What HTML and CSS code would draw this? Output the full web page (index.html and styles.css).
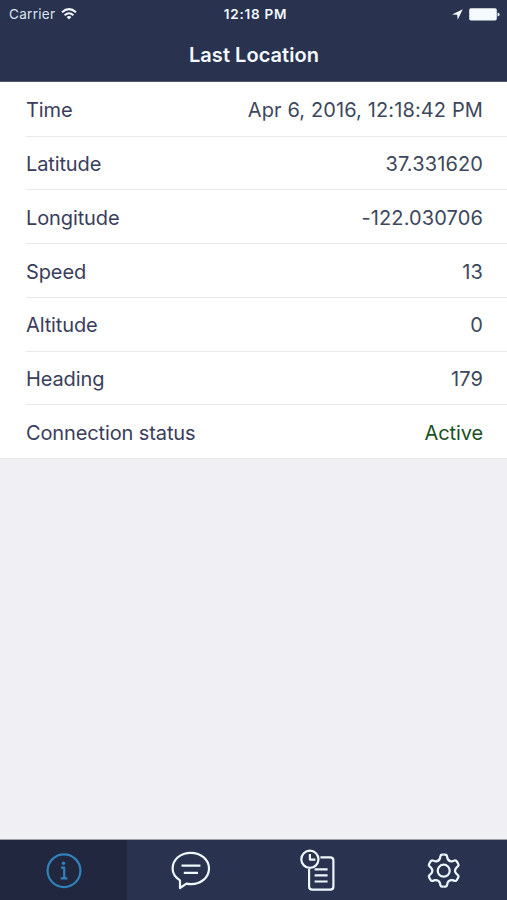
FILE: index.html
```html
<!DOCTYPE html>
<html lang="en">
<head>
<meta charset="utf-8">
<title>Last Location</title>
<link rel="stylesheet" href="styles.css">
</head>
<body>
<div class="app">
  <header class="header">
    <div class="status">
      <div class="carrier"><span>Carrier</span>
        <svg class="wifi" width="16" height="12" viewBox="0 0 16 12" fill="none" stroke="currentColor" stroke-width="2"><path d="M1 4.3Q8-2 15 4.3M3.6 7.2Q8 3.2 12.4 7.2"/><path d="M5.6 9Q8 7 10.4 9L8 11.5Z" fill="currentColor" stroke="none"/></svg>
      </div>
      <div class="clock">12:18 PM</div>
      <div class="indicators">
        <svg width="11" height="11" viewBox="0 0 11 11" fill="currentColor"><path d="M10.8.2 0 5.6 5.2 5.8 5.7 10.8Z"/></svg>
        <svg width="31" height="13" viewBox="0 0 31 13" fill="currentColor"><rect x=".2" y=".3" width="27.6" height="12.2" rx="1.8"/><path d="M28.6 4.4Q30.6 4.8 30.6 6.4T28.6 8.4Z"/></svg>
      </div>
    </div>
    <h1 class="title">Last Location</h1>
  </header>
  <main class="list">
    <div class="row"><span class="label">Time</span><span class="value">Apr 6, 2016, 12:18:42 PM</span></div>
    <div class="row"><span class="label">Latitude</span><span class="value">37.331620</span></div>
    <div class="row"><span class="label">Longitude</span><span class="value">-122.030706</span></div>
    <div class="row"><span class="label">Speed</span><span class="value">13</span></div>
    <div class="row"><span class="label">Altitude</span><span class="value">0</span></div>
    <div class="row"><span class="label">Heading</span><span class="value">179</span></div>
    <div class="row"><span class="label">Connection status</span><span class="value active">Active</span></div>
  </main>
  <nav class="tabs">
    <a class="tab selected" aria-label="Info">
      <svg class="icon" viewBox="-22 -22 44 44"><circle cx="1" cy=".7" r="16.4"/><path d="M-2-2.3H1.2V8.4M-2.3 8.4H4.4"/><circle cx=".5" cy="-6.8" r="1.7" class="solid"/></svg>
    </a>
    <a class="tab" aria-label="Messages">
      <svg class="icon" viewBox="-22 -22 44 44"><path d="M-10 10.4C-14.8 7.4-17.4 3.6-17.4-1.4C-17.4-10.6-9.5-17.2.8-17.2S19-10.4 19-1.5S11.2 14.2 1 14.2Q-1.2 14.2-3.6 13.7L-10 18Z"/><path d="M-8.5-4.3H10.4M-6.2 2.8H8" stroke-width="2.3"/></svg>
    </a>
    <a class="tab" aria-label="History">
      <svg class="icon" viewBox="-22 -22 44 44"><circle cx="-7.1" cy="-10.7" r="8.6"/><path d="M-7.1-16V-10.4H-1.6M3.4-12.7H13.2Q16.4-12.7 16.4-9.5V16.4Q16.4 19.6 13.2 19.6H-4.7Q-7.9 19.6-7.9 16.4V-1M-2.4-.6H10.6M-2.4 5.4H10.6M-2.4 11.5H10.6"/></svg>
    </a>
    <a class="tab" aria-label="Settings">
      <svg class="icon" viewBox="-22 -22 44 44"><g transform="translate(-.3 .7)"><path id="half" d="M0-16H1.5Q3-16 3.3-14.5L3.8-12.2Q5-9 8.67-9.39L11-10.2Q12.36-10.6 13.1-9.3L14.6-6.7Q15.36-5.4 14.2-4.4L12.47-2.81Q10.2 0 12.47 2.81L14.2 4.4Q15.36 5.4 14.6 6.7L13.1 9.3Q12.36 10.6 11 10.2L8.67 9.39Q5 9 3.8 12.2L3.3 14.5Q3 16 1.5 16H0"/><use href="#half" transform="scale(-1 1)"/><circle r="6"/></g></svg>
    </a>
  </nav>
</div>
</body>
</html>
```
FILE: styles.css
```css
* { box-sizing: border-box; }
body { margin: 0; font-family: Inter, "Liberation Sans", sans-serif; background: #efeff4; }
.app { height: 900px; display: flex; flex-direction: column; }
.header { height: 82px; background: #29324f; color: #f4faff; border-bottom: 1px solid #56586c; }
.status { height: 27px; display: grid; grid-template-columns: 1fr auto 1fr; align-items: center; padding: 1px 7px 0 9px; font-size: 13.5px; }
.carrier { display: flex; align-items: center; gap: 6px; color: #dbe5f0; letter-spacing: .3px; }
.wifi { color: #f4faff; }
.clock { font-weight: 600; font-size: 13.5px; letter-spacing: .75px; padding-left: 2px; line-height: 16px; margin-top: -1px; }
.indicators { display: flex; align-items: center; justify-content: flex-end; gap: 6px; }
.title { margin: 0; text-align: center; font-size: 20px; line-height: 56px; font-weight: 600; letter-spacing: .05px; padding-left: 1px; }
.list { background: #fff; height: 377px; display: flex; flex-direction: column; border-bottom: 1px solid #e6e6ea; }
.row { height: 53.8px; margin-left: 26px; padding: 2.4px 24px 0 0; display: flex; align-items: center; justify-content: space-between; border-bottom: 1px solid #e9e9ec; font-size: 20px; line-height: 24px; color: #393d5b; }
.row:first-child { height: 54.6px; }
.row:last-child { height: 52.6px; border-bottom: 0; }
.label { letter-spacing: -.12px; }
.value { color: #3d475b; letter-spacing: .12px; }
.active { color: #18501f; letter-spacing: -.12px; }
.tabs { margin-top: auto; height: 61px; display: flex; background: #29324f; border-top: 1px solid #9b9fac; }
.tab { flex: 1; display: flex; align-items: center; justify-content: center; color: #edf8ff; }
.selected { background: #20273f; color: #3282bb; }
.icon { width: 44px; height: 44px; fill: none; stroke: currentColor; stroke-width: 2.2; stroke-linejoin: round; }
.solid { fill: currentColor; stroke: none; }
```
